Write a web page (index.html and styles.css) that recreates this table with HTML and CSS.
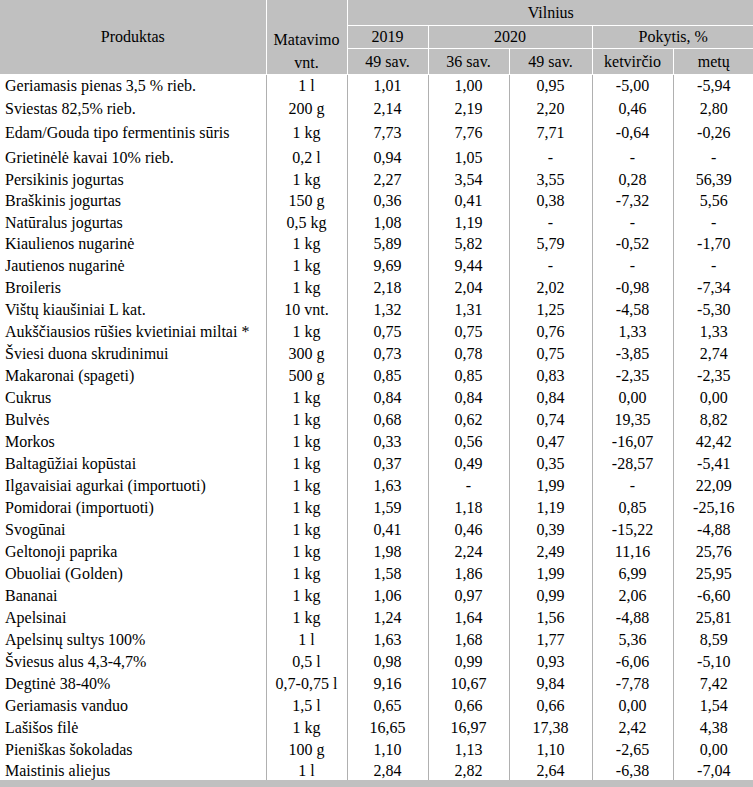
FILE: index.html
```html
<!DOCTYPE html>
<html lang="lt">
<head>
<meta charset="utf-8">
<link rel="stylesheet" href="styles.css">
</head>
<body>
<table class="prices">
<colgroup>
<col class="c-prod"><col class="c-unit"><col class="c-n"><col class="c-n"><col class="c-n3"><col class="c-n"><col class="c-n">
</colgroup>
<thead>
<tr class="h1">
<th rowspan="3" class="prod-h">Produktas</th>
<th rowspan="3" class="unit-h"><span>Matavimo</span><span>vnt.</span></th>
<th colspan="5">Vilnius</th>
</tr>
<tr class="h2">
<th>2019</th>
<th colspan="2">2020</th>
<th colspan="2">Pokytis, %</th>
</tr>
<tr class="h3">
<th>49 sav.</th><th>36 sav.</th><th>49 sav.</th><th>ketvirčio</th><th>metų</th>
</tr>
</thead>
<tbody>
<tr class="r23"><td>Geriamasis pienas 3,5 % rieb.</td><td>1 l</td><td>1,01</td><td>1,00</td><td>0,95</td><td>-5,00</td><td>-5,94</td></tr>
<tr class="r22"><td>Sviestas 82,5% rieb.</td><td>200 g</td><td>2,14</td><td>2,19</td><td>2,20</td><td>0,46</td><td>2,80</td></tr>
<tr class="r26"><td>Edam/Gouda tipo fermentinis sūris</td><td>1 kg</td><td>7,73</td><td>7,76</td><td>7,71</td><td>-0,64</td><td>-0,26</td></tr>
<tr class="r24"><td>Grietinėlė kavai 10% rieb.</td><td>0,2 l</td><td>0,94</td><td>1,05</td><td>-</td><td>-</td><td>-</td></tr>
<tr class="r21"><td>Persikinis jogurtas</td><td>1 kg</td><td>2,27</td><td>3,54</td><td>3,55</td><td>0,28</td><td>56,39</td></tr>
<tr class="r21"><td>Braškinis jogurtas</td><td>150 g</td><td>0,36</td><td>0,41</td><td>0,38</td><td>-7,32</td><td>5,56</td></tr>
<tr class="r22"><td>Natūralus jogurtas</td><td>0,5 kg</td><td>1,08</td><td>1,19</td><td>-</td><td>-</td><td>-</td></tr>
<tr class="r21"><td>Kiaulienos nugarinė</td><td>1 kg</td><td>5,89</td><td>5,82</td><td>5,79</td><td>-0,52</td><td>-1,70</td></tr>
<tr class="r22"><td>Jautienos nugarinė</td><td>1 kg</td><td>9,69</td><td>9,44</td><td>-</td><td>-</td><td>-</td></tr>
<tr class="r22"><td>Broileris</td><td>1 kg</td><td>2,18</td><td>2,04</td><td>2,02</td><td>-0,98</td><td>-7,34</td></tr>
<tr class="r22"><td>Vištų kiaušiniai L kat.</td><td>10 vnt.</td><td>1,32</td><td>1,31</td><td>1,25</td><td>-4,58</td><td>-5,30</td></tr>
<tr class="r22"><td>Aukščiausios rūšies kvietiniai miltai *</td><td>1 kg</td><td>0,75</td><td>0,75</td><td>0,76</td><td>1,33</td><td>1,33</td></tr>
<tr class="r22"><td>Šviesi duona skrudinimui</td><td>300 g</td><td>0,73</td><td>0,78</td><td>0,75</td><td>-3,85</td><td>2,74</td></tr>
<tr class="r22"><td>Makaronai (spageti)</td><td>500 g</td><td>0,85</td><td>0,85</td><td>0,83</td><td>-2,35</td><td>-2,35</td></tr>
<tr class="r22"><td>Cukrus</td><td>1 kg</td><td>0,84</td><td>0,84</td><td>0,84</td><td>0,00</td><td>0,00</td></tr>
<tr class="r22"><td>Bulvės</td><td>1 kg</td><td>0,68</td><td>0,62</td><td>0,74</td><td>19,35</td><td>8,82</td></tr>
<tr class="r22"><td>Morkos</td><td>1 kg</td><td>0,33</td><td>0,56</td><td>0,47</td><td>-16,07</td><td>42,42</td></tr>
<tr class="r22"><td>Baltagūžiai kopūstai</td><td>1 kg</td><td>0,37</td><td>0,49</td><td>0,35</td><td>-28,57</td><td>-5,41</td></tr>
<tr class="r22"><td>Ilgavaisiai agurkai (importuoti)</td><td>1 kg</td><td>1,63</td><td>-</td><td>1,99</td><td>-</td><td>22,09</td></tr>
<tr class="r22"><td>Pomidorai (importuoti)</td><td>1 kg</td><td>1,59</td><td>1,18</td><td>1,19</td><td>0,85</td><td>-25,16</td></tr>
<tr class="r22"><td>Svogūnai</td><td>1 kg</td><td>0,41</td><td>0,46</td><td>0,39</td><td>-15,22</td><td>-4,88</td></tr>
<tr class="r22"><td>Geltonoji paprika</td><td>1 kg</td><td>1,98</td><td>2,24</td><td>2,49</td><td>11,16</td><td>25,76</td></tr>
<tr class="r22"><td>Obuoliai (Golden)</td><td>1 kg</td><td>1,58</td><td>1,86</td><td>1,99</td><td>6,99</td><td>25,95</td></tr>
<tr class="r22"><td>Bananai</td><td>1 kg</td><td>1,06</td><td>0,97</td><td>0,99</td><td>2,06</td><td>-6,60</td></tr>
<tr class="r22"><td>Apelsinai</td><td>1 kg</td><td>1,24</td><td>1,64</td><td>1,56</td><td>-4,88</td><td>25,81</td></tr>
<tr class="r22"><td>Apelsinų sultys 100%</td><td>1 l</td><td>1,63</td><td>1,68</td><td>1,77</td><td>5,36</td><td>8,59</td></tr>
<tr class="r22"><td>Šviesus alus 4,3-4,7%</td><td>0,5 l</td><td>0,98</td><td>0,99</td><td>0,93</td><td>-6,06</td><td>-5,10</td></tr>
<tr class="r22"><td>Degtinė 38-40%</td><td>0,7-0,75 l</td><td>9,16</td><td>10,67</td><td>9,84</td><td>-7,78</td><td>7,42</td></tr>
<tr class="r22"><td>Geriamasis vanduo</td><td>1,5 l</td><td>0,65</td><td>0,66</td><td>0,66</td><td>0,00</td><td>1,54</td></tr>
<tr class="r22"><td>Lašišos filė</td><td>1 kg</td><td>16,65</td><td>16,97</td><td>17,38</td><td>2,42</td><td>4,38</td></tr>
<tr class="r22"><td>Pieniškas šokoladas</td><td>100 g</td><td>1,10</td><td>1,13</td><td>1,10</td><td>-2,65</td><td>0,00</td></tr>
<tr class="last"><td>Maistinis aliejus</td><td>1 l</td><td>2,84</td><td>2,82</td><td>2,64</td><td>-6,38</td><td>-7,04</td></tr>
</tbody>
<tfoot>
<tr class="foot"><td colspan="7"></td></tr>
</tfoot>
</table>
</body>
</html>
```
FILE: styles.css
```css
html, body {
  margin: 0;
  padding: 0;
  background: #ffffff;
}

.prices {
  width: 753px;
  table-layout: fixed;
  border-collapse: collapse;
  font-family: "Liberation Serif", "Times New Roman", serif;
  font-size: 16px;
  color: #000000;
}

.c-prod { width: 266px; }
.c-unit { width: 81px; }
.c-n { width: 81px; }
.c-n3 { width: 83px; }

.prices th {
  background: #c0c0c0;
  font-weight: normal;
  border: 1px solid #ffffff;
  padding: 0;
  text-align: center;
  line-height: 20px;
}

.prices thead tr.h1 th { border-top: none; }
.prices thead th:first-child { border-left: none; }
.prices thead tr.h1 th:last-child,
.prices thead tr.h2 th:last-child,
.prices thead tr.h3 th:last-child { border-right: none; }

.h1 { height: 25px; }
.h2 { height: 23px; }
.h3 { height: 25px; }

.prod-h {
  vertical-align: middle;
}

.unit-h {
  vertical-align: top;
  padding-top: 28px !important;
}

.unit-h span {
  display: block;
  line-height: 23px;
}

.prices td {
  padding: 0;
  text-align: center;
  border-left: 1px solid #b0b0b0;
  line-height: 18px;
  white-space: nowrap;
}

.prices td:first-child {
  text-align: left;
  padding-left: 5px;
  border-left: none;
}

.r21 { height: 21px; }
.r22 { height: 22px; }
.r23 { height: 23px; }
.r24 { height: 24px; }
.r26 { height: 26px; }

.last { height: 19px; }
.last td {
  vertical-align: top;
  padding-top: 1px;
}

.prices tfoot td {
  background: #c0c0c0;
  height: 10px;
  border: none;
}
```
